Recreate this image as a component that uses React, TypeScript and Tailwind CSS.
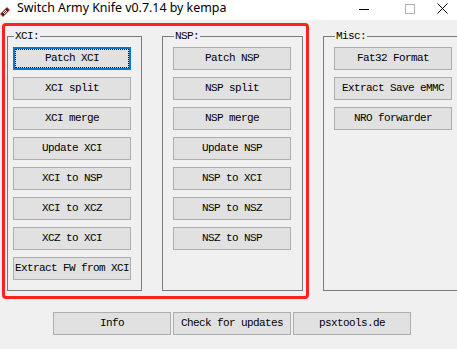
import React from 'react';

const mono = { fontFamily: '"Liberation Mono", "DejaVu Sans Mono", monospace' };

function Btn({ label, focused = false }: { label: string; focused?: boolean }) {
  return (
    <button
      className={`w-[118px] h-[23px] bg-[#e1e1e1] text-[11px] tracking-[-0.6px] text-black leading-none flex items-center justify-center whitespace-nowrap ${
        focused
          ? 'border-2 border-[#0078d7] outline-1 outline-dotted outline-black outline-offset-[-3px]'
          : 'border border-[#adadad]'
      }`}
      style={mono}
    >
      {label}
    </button>
  );
}

function Group({
  title,
  className,
  children,
}: {
  title: string;
  className: string;
  children: React.ReactNode;
}) {
  return (
    <fieldset className={`border border-[#7a7a7a] h-[261px] shrink-0 ${className}`}>
      <legend
        className="ml-[1px] px-[1px] text-[11px] tracking-[-0.6px] leading-[12px] text-black"
        style={mono}
      >
        {title}
      </legend>
      <div className="flex flex-col gap-[7px] mt-[5px]">{children}</div>
    </fieldset>
  );
}

export default function App() {
  const xci = ['XCI split', 'XCI merge', 'Update XCI', 'XCI to NSP', 'XCI to XCZ', 'XCZ to XCI', 'Extract FW from XCI'];
  const nsp = ['Patch NSP', 'NSP split', 'NSP merge', 'Update NSP', 'NSP to XCI', 'NSP to NSZ', 'NSZ to NSP'];
  const misc = ['Fat32 Format', 'Extract Save eMMC', 'NRO forwarder'];

  return (
    <div className="relative w-[457px] h-[349px] bg-[#f0f0f0] overflow-hidden">
      {/* title bar */}
      <div className="h-[20px] bg-white flex items-center relative">
        <svg width="11" height="12" viewBox="0 0 11 12" className="mt-[2px]">
          <path d="M0 9 L7 2 L10 5 L3 12 Z" fill="#e0242a" />
          <path d="M1 9 L7 3 L9 5 L3 11 Z" fill="#2b2b2b" />
          <path d="M3 8 L6 5 M4 9 L7 6" stroke="#fff" strokeWidth="1" />
        </svg>
        <span
          className="ml-[6px] text-[12.4px] text-black leading-none -mt-[3px]"
          style={{ fontFamily: '"Noto Sans", "Noto Sans CJK SC", sans-serif' }}
        >
          Switch Army Knife v0.7.14 by kempa
        </span>
        <div className="ml-auto flex items-center h-full -mt-[3px]">
          <div className="w-[46px] flex justify-center">
            <div className="w-[10px] h-px bg-black mt-[2px]" />
          </div>
          <div className="w-[46px] flex justify-center">
            <div className="w-[10px] h-[10px] border border-[#b0b0b0]" />
          </div>
          <div className="w-[24px] flex justify-start pl-[4px]">
            <svg width="11" height="11" viewBox="0 0 11 11">
              <path d="M0.5 0.5 L10.5 10.5 M10.5 0.5 L0.5 10.5" stroke="#000" strokeWidth="1" />
            </svg>
          </div>
        </div>
      </div>

      {/* groups */}
      <div className="flex gap-[20px] pl-[7px] pt-[10px]">
        <Group title="XCI:" className="w-[135px] pl-[5px]">
          <Btn label="Patch XCI" focused />
          {xci.map((x) => (
            <Btn key={x} label={x} />
          ))}
        </Group>
        <Group title="NSP:" className="w-[141px] pl-[10px]">
          {nsp.map((x) => (
            <Btn key={x} label={x} />
          ))}
        </Group>
        <Group title="Misc:" className="w-[145px] pl-[10px]">
          {misc.map((x) => (
            <Btn key={x} label={x} />
          ))}
        </Group>
      </div>

      {/* bottom buttons */}
      <div className="flex gap-[2px] pl-[53px] mt-[21px]">
        <Btn label="Info" />
        <Btn label="Check for updates" />
        <Btn label="psxtools.de" />
      </div>

      {/* red annotation frame */}
      <div className="absolute left-[2px] top-[23px] w-[307px] h-[276px] border-[3px] border-[#ff2020] rounded-[4px] pointer-events-none" />
    </div>
  );
}
